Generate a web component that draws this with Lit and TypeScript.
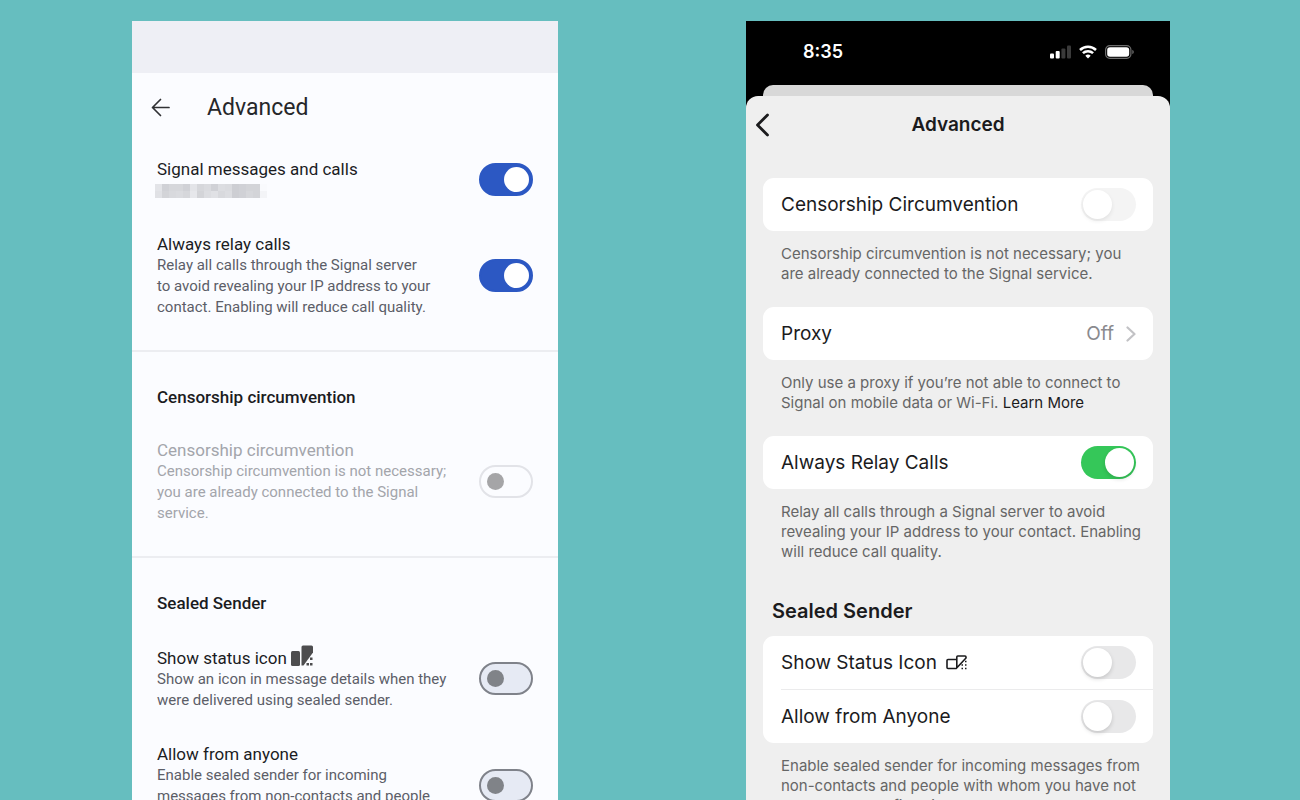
import { LitElement, html, css, svg } from "lit";
import { customElement, property } from "lit/decorators.js";

@customElement("android-row")
class AndroidRow extends LitElement {
  @property() heading = "";
  @property() text = "";
  @property({ type: Boolean }) on = false;
  @property({ type: Boolean }) disabled = false;
  @property({ type: Boolean }) redacted = false;
  @property({ type: Boolean }) icon = false;

  static styles = css`
    :host { display: block; }
    .row { display: flex; align-items: center; justify-content: space-between; padding: 16px 25px; gap: 24px; }
    .label { display: block; color: #1b1c1f; }
    .title { display: flex; align-items: flex-end; gap: 4px; font-size: 17px; line-height: 22px; }
    .title svg { display: block; margin-bottom: 2px; }
    .sub { display: block; font-size: 15px; line-height: 21px; color: #5c5e68; white-space: pre-line; }
    .mosaic { display: block; margin: 4px 0 3px -2px; }
    .off .title, .off .sub { color: #a3a5ab; }
    .switch {
      appearance: none; flex: none; box-sizing: border-box; position: relative; margin: 0;
      width: 54px; height: 33px; border-radius: 17px; border: 2px solid #7f828a; background: #e6eaf4;
    }
    .switch::before {
      content: ""; position: absolute; left: 6px; top: 6px; width: 17px; height: 17px;
      border-radius: 50%; background: #808388;
    }
    .switch:checked { background: #2c58c3; border-color: #2c58c3; }
    .switch:checked::before { left: 23px; top: 2px; width: 25px; height: 25px; background: #fff; }
    .switch:disabled { background: transparent; border-color: #e2e3e8; }
    .switch:disabled::before { background: #a5a5a7; }
  `;

  private mosaic() {
    const rows = [
      ["#e3e4e8", "#d0d1d6", "#d6d7db", "#d6d7db", "#d0d1d6", "#e3e4e8", "#d6d7db", "#dadbdf", "#d0d1d6", "#dcdde1", "#dadbdf", "#cdced3", "#d0d1d6", "#d3d4d8", "#d3d4d8", "#f9fafd"],
      ["#e0e1e5", "#d3d4d8", "#d8d9dd", "#dadbdf", "#d6d7db", "#e6e7eb", "#d3d4d8", "#dcdde1", "#e0e1e5", "#d8d9dd", "#dcdde1", "#cdced3", "#d0d1d6", "#d6d7db", "#d3d4d8", "#f3f4f7"],
    ];
    return html`<svg class="mosaic" width="112" height="14" viewBox="0 0 112 14" shape-rendering="crispEdges" aria-label="Hidden phone number">
      ${rows.map((r, y) => r.map((c, x) => svg`<rect x=${x * 7} y=${y * 7} width="7" height="7" fill=${c} />`))}
    </svg>`;
  }

  render() {
    return html`<div class="row ${this.disabled ? "off" : ""}">
      <label class="label" for="s">
        <span class="title">${this.heading}
          ${this.icon
            ? html`<svg width="22" height="22" viewBox="0 0 22 22" fill="#4d4d4f">
                <rect x="0" y="6" width="9" height="15" rx="1.5" />
                <path d="M12 .5h8.500q1.500 0 1.500 1.500v5.500L12.500 20.500h-2V2q0-1.500 1.500-1.500z" />
                <rect x="19" y="12.500" width="2.500" height="2.500" /><rect x="15.500" y="18" width="2.500" height="2.500" /><rect x="19" y="18" width="2.500" height="2.500" />
              </svg>`
            : ""}
        </span>
        ${this.redacted ? this.mosaic() : html`<span class="sub">${this.text}</span>`}
      </label>
      <input id="s" class="switch" type="checkbox" role="switch" .checked=${this.on} ?disabled=${this.disabled} />
    </div>`;
  }
}

@customElement("ios-row")
class IosRow extends LitElement {
  @property() heading = "";
  @property({ type: Boolean }) on = false;
  @property({ type: Boolean }) disabled = false;
  @property({ type: Boolean }) icon = false;

  static styles = css`
    :host { display: block; }
    .row { display: flex; align-items: center; justify-content: space-between; height: 53px; padding-right: 17px; }
    .title { display: flex; align-items: center; gap: 9px; font-size: 19px; line-height: 24px; color: #1b1b1d; }
    .switch {
      appearance: none; flex: none; position: relative; margin: 0;
      width: 55px; height: 33px; border-radius: 17px; background: #e8e8e9;
    }
    .switch::before {
      content: ""; position: absolute; left: 2px; top: 2px; width: 29px; height: 29px;
      border-radius: 50%; background: #fff; box-shadow: 0 2px 4px rgba(0, 0, 0, 0.15);
    }
    .switch:checked { background: #35c759; }
    .switch:checked::before { left: 24px; }
    .switch:disabled { background: #f4f4f4; }
    .switch:disabled::before { box-shadow: 0 2px 4px rgba(0, 0, 0, 0.08); }
  `;

  render() {
    return html`<div class="row">
      <label class="title" for="s">${this.heading}
        ${this.icon
          ? html`<svg width="21" height="16" viewBox="0 0 21 16" fill="none" stroke="#1b1b1d" stroke-width="1.600" stroke-linejoin="round">
              <path d="M10.800 4.500H2q-1 0-1 1V12.500q0 1 1 1h8.200L20 3V2q0-1-1-1h-7.200q-1 0-1 1v11" />
              <path d="M19 6.500h1.500M15.500 10h1.500M19 10h1.500M15.500 13.500h1.500M19 13.500h1.500" />
            </svg>`
          : ""}
      </label>
      <input id="s" class="switch" type="checkbox" role="switch" .checked=${this.on} ?disabled=${this.disabled} />
    </div>`;
  }
}

@customElement("app-root")
class AppRoot extends LitElement {
  static styles = css`
    :host { display: block; height: 100vh; overflow: hidden; background: #66bebf; }
    .stage { display: grid; grid-template-columns: 426fr 424fr; gap: 188px; box-sizing: border-box; height: 100%; padding: 21px 130px 0 132px; }
    .phone { min-width: 0; overflow: hidden; }
    h1, h2, p { margin: 0; }
    button { border: 0; background: none; padding: 0; display: block; }
    svg { display: block; }

    .android { background: #fbfcff; font-family: Roboto, sans-serif; }
    .android .status { height: 52px; background: #eeeff5; }
    .android header { display: flex; align-items: center; gap: 36px; height: 69px; padding-left: 19px; }
    .android h1 { font-size: 23px; line-height: 28px; font-weight: 400; color: #26272a; }
    .android hr { border: 0; height: 2px; margin: 16px 0 34px; background: #ecedf1; }
    .android h2 { padding: 0 25px; margin-bottom: 15px; font-size: 17px; line-height: 22px; font-weight: 500; color: #1b1c1f; }

    .ios { background: #000; font-family: Inter, sans-serif; display: flex; flex-direction: column; }
    .ios .status { display: flex; align-items: center; justify-content: space-between; height: 62px; padding: 0 36px 2px 57px; color: #fff; }
    .time { font-size: 18px; line-height: 24px; font-weight: 600; }
    .signals { display: flex; align-items: center; gap: 8px; }
    .behind { height: 11px; margin: 0 17px; border-radius: 10px 10px 0 0; background: #d8d8d8; }
    .sheet { flex: 1; min-height: 0; border-radius: 12px 12px 0 0; background: #efefef; padding: 0 17px; }
    .nav { display: grid; grid-template-columns: 1fr auto 1fr; align-items: center; height: 58px; margin: 0 -8px 24px; }
    .nav h1 { font-size: 19px; line-height: 24px; font-weight: 600; color: #1b1b1d; }
    .card { border-radius: 11px; background: #fff; padding-left: 18px; }
    .card ios-row + ios-row { border-top: 1px solid #ebebec; }
    .note { margin: 13px 8px 23px 18px; font-size: 15px; line-height: 20px; color: #666; }
    .note a { color: #1b1b1d; text-decoration: none; }
    .ios h2 { margin: 37px 0 13px 9px; font-size: 20px; line-height: 24px; font-weight: 600; color: #1b1b1d; }
    .link { display: flex; align-items: center; height: 53px; padding-right: 17px; font-size: 19px; line-height: 24px; color: #1b1b1d; text-decoration: none; }
    .value { margin-left: auto; margin-right: 12px; color: #8a8a8e; }
  `;

  render() {
    return html`<main class="stage">
      <section class="phone android">
        <div class="status"></div>
        <header>
          <button aria-label="Back">
            <svg width="20" height="20" viewBox="0 0 20 20" fill="none" stroke="#303134" stroke-width="1.700" stroke-linecap="round" stroke-linejoin="round"><path d="M18 9.500H1.500M9.500 1.500L1.500 9.500l8 8" /></svg>
          </button>
          <h1>Advanced</h1>
        </header>
        <android-row heading="Signal messages and calls" redacted on></android-row>
        <android-row heading="Always relay calls" on .text=${"Relay all calls through the Signal server\nto avoid revealing your IP address to your\ncontact. Enabling will reduce call quality."}></android-row>
        <hr />
        <h2>Censorship circumvention</h2>
        <android-row heading="Censorship circumvention" disabled .text=${"Censorship circumvention is not necessary;\nyou are already connected to the Signal\nservice."}></android-row>
        <hr />
        <h2>Sealed Sender</h2>
        <android-row heading="Show status icon" icon .text=${"Show an icon in message details when they\nwere delivered using sealed sender."}></android-row>
        <android-row heading="Allow from anyone" .text=${"Enable sealed sender for incoming\nmessages from non-contacts and people\nwith whom you have not shared."}></android-row>
      </section>

      <section class="phone ios">
        <div class="status">
          <span class="time">8:35</span>
          <span class="signals">
            <svg width="21" height="14" viewBox="0 0 21 14" fill="#fff">
              <rect x="0" y="8.500" width="4" height="5" rx="1" /><rect x="5.700" y="6" width="4" height="7.500" rx="1" />
              <rect x="11.400" y="3.500" width="4" height="10" rx="1" fill="#3a3a3a" /><rect x="17" y="0.500" width="4" height="13" rx="1" fill="#3a3a3a" />
            </svg>
            <svg width="18" height="14" viewBox="0 0 18 14" fill="none" stroke="#fff" stroke-width="2.500">
              <path d="M1 5a11.500 11.500 0 0 1 16 0" /><path d="M3.900 8.200a7.400 7.400 0 0 1 10.200 0" />
              <path d="M9 13.500L6.300 10.800a3.900 3.900 0 0 1 5.400 0z" fill="#fff" stroke="none" />
            </svg>
            <svg width="29" height="14" viewBox="0 0 29 14">
              <rect x=".6" y=".6" width="25.300" height="12.800" rx="4.200" fill="none" stroke="#6d6d6d" stroke-width="1.200" />
              <rect x="2.200" y="2.200" width="22" height="9.600" rx="2.800" fill="#fff" /><path d="M27.300 4.800q1.500 .8 1.500 2.200t-1.500 2.200z" fill="#6d6d6d" />
            </svg>
          </span>
        </div>
        <div class="behind"></div>
        <div class="sheet">
          <div class="nav">
            <button aria-label="Back">
              <svg width="14" height="24" viewBox="0 0 14 24" fill="none" stroke="#1b1b1d" stroke-width="2.800" stroke-linecap="round" stroke-linejoin="round"><path d="M12.500 2L2.500 12l10 10" /></svg>
            </button>
            <h1>Advanced</h1>
          </div>
          <div class="card"><ios-row heading="Censorship Circumvention" disabled></ios-row></div>
          <p class="note">Censorship circumvention is not necessary; you are already connected to the Signal service.</p>
          <div class="card">
            <a class="link" href="#proxy">Proxy<span class="value">Off</span>
              <svg width="10" height="16" viewBox="0 0 10 16" fill="none" stroke="#c2c2c5" stroke-width="2.200" stroke-linecap="round" stroke-linejoin="round"><path d="M1.500 1.500L8.500 8l-7 6.500" /></svg>
            </a>
          </div>
          <p class="note">Only use a proxy if you’re not able to connect to Signal on mobile data or Wi-Fi. <a href="#learn">Learn More</a></p>
          <div class="card"><ios-row heading="Always Relay Calls" on></ios-row></div>
          <p class="note">Relay all calls through a Signal server to avoid revealing your IP address to your contact. Enabling will reduce call quality.</p>
          <h2>Sealed Sender</h2>
          <div class="card">
            <ios-row heading="Show Status Icon" icon></ios-row>
            <ios-row heading="Allow from Anyone"></ios-row>
          </div>
          <p class="note">Enable sealed sender for incoming messages from non-contacts and people with whom you have not shared your profile with.</p>
        </div>
      </section>
    </main>`;
  }
}
